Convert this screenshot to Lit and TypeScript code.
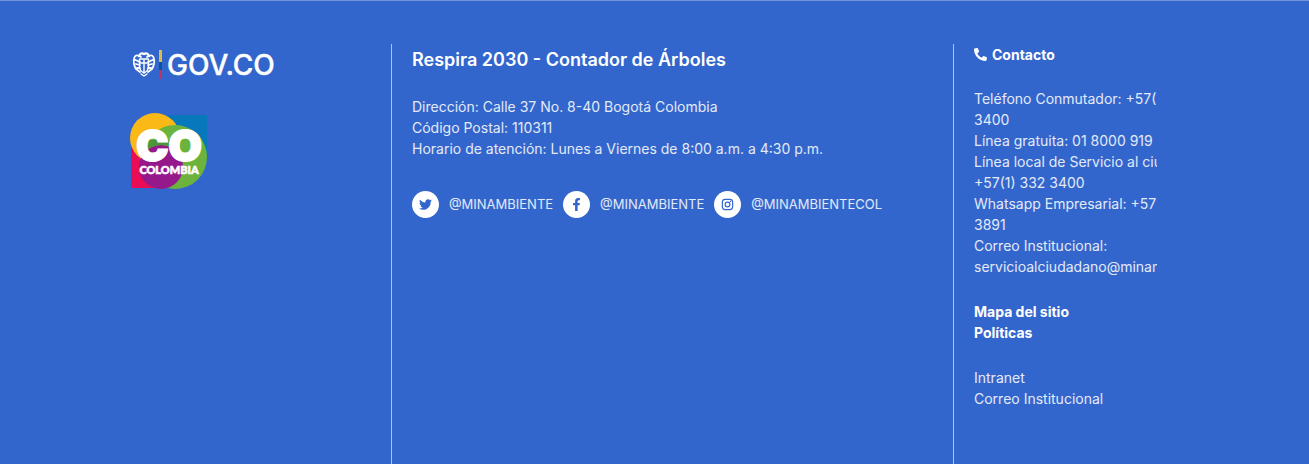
import { LitElement, html, css, svg } from "lit";
import { customElement } from "lit/decorators.js";

const phone = svg`<path fill="currentColor" d="M493.4 24.6l-104-24c-11.3-2.6-22.9 3.3-27.5 13.9l-48 112c-4.2 9.8-1.4 21.3 6.9 28l60.6 49.6c-36 76.7-98.9 140.5-177.2 177.2l-49.6-60.6c-6.800-8.300-18.200-11.100-28-6.900l-112 48C3.900 366.500-2 378.100.600 389.400l24 104C27.100 504.200 36.700 512 48 512c256.100 0 464-207.500 464-464 0-11.200-7.700-20.900-18.600-23.400z"/>`;

const twitter = svg`<path fill="currentColor" d="M459.37 151.716c.325 4.548.325 9.097.325 13.645 0 138.72-105.583 298.558-298.558 298.558-59.452 0-114.680-17.219-161.137-47.106 8.447.974 16.568 1.299 25.340 1.299 49.055 0 94.213-16.568 130.274-44.832-46.132-.975-84.792-31.188-98.112-72.772 6.498.974 12.995 1.624 19.818 1.624 9.421 0 18.843-1.300 27.614-3.573-48.081-9.747-84.143-51.980-84.143-102.985v-1.299c13.969 7.797 30.214 12.670 47.431 13.319-28.264-18.843-46.781-51.005-46.781-87.391 0-19.492 5.197-37.360 14.294-52.954 51.655 63.675 129.300 105.258 216.365 109.807-1.624-7.797-2.599-15.918-2.599-24.040 0-57.828 46.782-104.934 104.934-104.934 30.213 0 57.502 12.670 76.670 33.137 23.715-4.548 46.456-13.320 66.599-25.340-7.798 24.366-24.366 44.833-46.132 57.827 21.117-2.273 41.584-8.122 60.426-16.243-14.292 20.791-32.161 39.308-52.628 54.253z"/>`;

const facebook = svg`<path fill="currentColor" transform="translate(96 0)" d="M279.14 288l14.220-92.660h-88.910v-60.130c0-25.350 12.420-50.060 52.240-50.060h40.420V6.260S260.430 0 225.360 0c-73.220 0-121.080 44.380-121.080 124.720v70.620H22.890V288h81.390v224h100.170V288z"/>`;

const instagram = svg`<g fill="none" stroke="currentColor"><rect x="53" y="53" width="406" height="406" rx="112" stroke-width="46"/><circle cx="256" cy="256" r="94" stroke-width="46"/></g><circle cx="374" cy="138" r="28" fill="currentColor"/>`;

const networks = [
  { icon: twitter, name: "Twitter", handle: "@MINAMBIENTE" },
  { icon: facebook, name: "Facebook", handle: "@MINAMBIENTE" },
  { icon: instagram, name: "Instagram", handle: "@MINAMBIENTECOL" },
];

@customElement("app-root")
export class AppRoot extends LitElement {
  static styles = css`
    :host {
      display: block;
      background: #3366cc;
      color: #fff;
      border-top: 1px solid #7094d6;
      font: 14px/21px Inter, "Open Sans", sans-serif;
    }
    .footer {
      box-sizing: border-box;
      min-height: calc(100vh - 1px);
      display: grid;
      grid-template-columns: 261fr 562fr 204fr;
      padding: 43px 152px 0 130px;
    }
    .logos {
      display: flex;
      flex-direction: column;
      align-items: flex-start;
      gap: 32px;
      padding-top: 3px;
    }
    .logos a, .logos svg { display: block; }
    .about, .contact {
      min-width: 0;
      border-left: 1px solid #b5c3dc;
      padding-left: 20px;
    }
    .contact { overflow: hidden; white-space: nowrap; }
    h2 {
      margin: 0;
      font-size: 18px;
      line-height: 32px;
      font-weight: 600;
    }
    h3 {
      display: flex;
      align-items: center;
      gap: 5px;
      margin: 0 0 23px;
      font-size: 14px;
      line-height: 21px;
      font-weight: 700;
    }
    p, address { margin: 0; font-style: normal; color: #e3eaf7; }
    .address { margin-top: 20px; }
    a { color: inherit; text-decoration: none; }
    .social {
      display: flex;
      flex-wrap: wrap;
      gap: 10px;
      margin: 32px 0 0;
      padding: 0;
      list-style: none;
      font-size: 13px;
    }
    .social a {
      display: flex;
      align-items: center;
      gap: 10px;
      color: #e3eaf7;
    }
    .badge {
      display: grid;
      place-items: center;
      width: 27px;
      height: 27px;
      border-radius: 50%;
      background: #fff;
      color: #3366cc;
    }
    .links {
      display: flex;
      flex-direction: column;
      align-items: flex-start;
      margin-top: 24px;
      color: #e3eaf7;
    }
    .strong { font-weight: 700; color: #fff; }
    .gov { font: 500 28px Inter, sans-serif; }
    .mark { font: 900 43px Inter, sans-serif; }
    .country { font: 900 11px Lato, sans-serif; }
  `;

  private govLogo() {
    return svg`<svg width="148" height="34" viewBox="0 0 148 34" role="img" aria-label="GOV.CO">
      <g fill="none" stroke="#fff" stroke-linecap="round" stroke-linejoin="round">
        <path stroke-width="2.400" d="M9 9 Q11 5 14 7 Q17 5 19 9"/>
        <path stroke-width="1.800" d="M11 10 Q5 6 4 12 Q3 17 6 22 L10 25 M17 10 Q23 6 24 12 Q25 17 22 22 L18 25 M5.500 13 L10 15 M6 17 L10 18 M7 21 L10 21 M22.500 13 L18 15 M22 17 L18 18 M21 21 L18 21"/>
        <path stroke-width="1.400" d="M9.500 12 H18.500 V20 Q18 24 14 26 Q10 24 9.500 20 Z M14 13 V25 M10 16 H18 M11 27 L14 29 L17 27"/>
      </g>
      <rect x="29" y="3" width="3" height="12" fill="#d9bd45"/>
      <rect x="29" y="15" width="3" height="8" fill="#07559f"/>
      <rect x="29" y="23" width="3" height="9" fill="#c13262"/>
      <text class="gov" x="37" y="28" fill="#fff" stroke="#fff" stroke-width="0.400">GOV.CO</text>
    </svg>`;
  }

  private colombiaLogo() {
    return svg`<svg width="78" height="78" viewBox="0 0 78 78" role="img" aria-label="CO Colombia">
      <path fill="#0878bd" d="M38 2H77V46H38Z"/>
      <path fill="#ea0c55" d="M1 31H40V75H1Z"/>
      <circle cx="25" cy="25" r="25" fill="#fbb917"/>
      <circle cx="45" cy="44" r="32" fill="#6cb33e"/>
      <circle cx="31" cy="54" r="22" fill="#95198a"/>
      <path d="M16 38 A22 22 0 0 1 46 38 A25 25 0 0 0 49 27 L20 27 Z" fill="#4a963b"/>
      <text class="mark" x="39" y="48" text-anchor="middle" fill="#fff" stroke="#fff" stroke-width="2">CO</text>
      <text class="country" x="39" y="61" text-anchor="middle" fill="#fff" stroke="#fff" stroke-width="0.600">COLOMBIA</text>
    </svg>`;
  }

  render() {
    return html`
      <footer class="footer">
        <div class="logos">
          <a href="#">${this.govLogo()}</a>
          <a href="#">${this.colombiaLogo()}</a>
        </div>
        <section class="about">
          <h2>Respira 2030 - Contador de Árboles</h2>
          <p class="address">
            Dirección: Calle 37 No. 8-40 Bogotá Colombia<br />
            Código Postal: 110311<br />
            Horario de atención: Lunes a Viernes de 8:00 a.m. a 4:30 p.m.
          </p>
          <ul class="social">
            ${networks.map(
              (n) => html`<li>
                <a href="#" title=${n.name}>
                  <span class="badge"><svg width="13" height="13" viewBox="0 0 512 512" aria-hidden="true">${n.icon}</svg></span>
                  <span>${n.handle}</span>
                </a>
              </li>`
            )}
          </ul>
        </section>
        <section class="contact">
          <h3><svg width="13" height="13" viewBox="0 0 512 512" aria-hidden="true"><g transform="matrix(-1 0 0 1 512 0)">${phone}</g></svg>Contacto</h3>
          <address>
            Teléfono Conmutador: +57(1) 332<br />
            3400<br />
            Línea gratuita: 01 8000 919 301<br />
            Línea local de Servicio al ciudadano:<br />
            +57(1) 332 3400<br />
            Whatsapp Empresarial: +57 310 221<br />
            3891<br />
            Correo Institucional:<br />
            <a href="mailto:servicioalciudadano@minambiente.gov.co">servicioalciudadano@minambiente.gov.co</a>
          </address>
          <nav class="links strong"><a href="#">Mapa del sitio</a><a href="#">Políticas</a></nav>
          <nav class="links"><a href="#">Intranet</a><a href="#">Correo Institucional</a></nav>
        </section>
      </footer>
    `;
  }
}
